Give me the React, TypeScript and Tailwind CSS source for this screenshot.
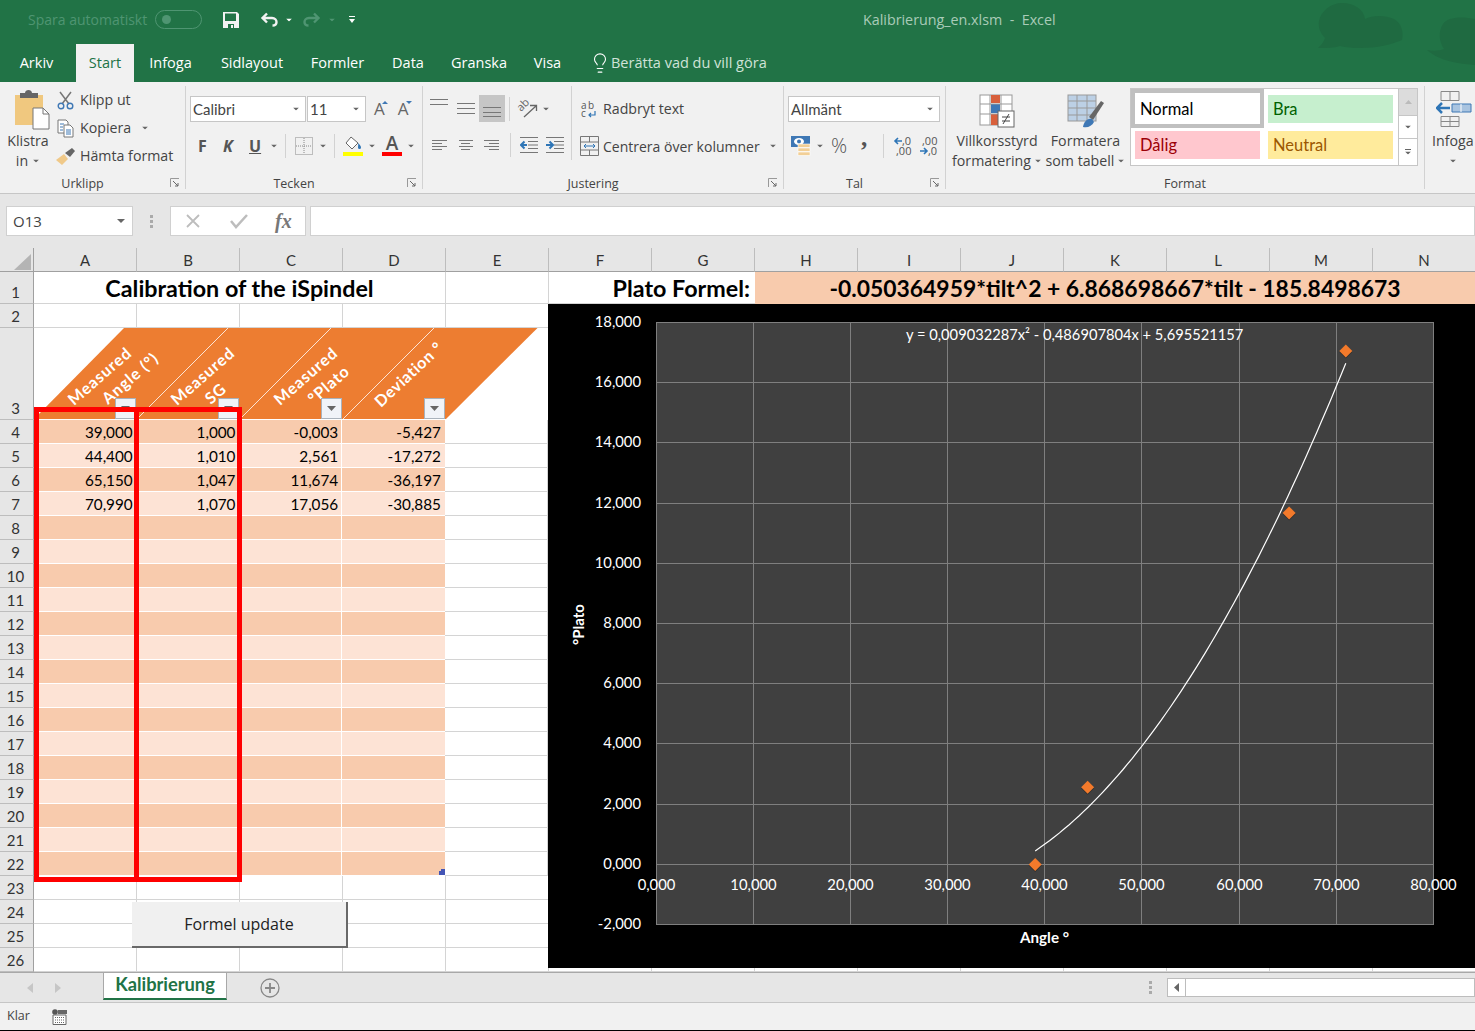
import { Lightbulb } from "lucide-react";

const COLS = ["A", "B", "C", "D", "E", "F", "G", "H", "I", "J", "K", "L", "M", "N"];
const DATA: Record<number, string[]> = {
  4: ["39,000", "1,000", "-0,003", "-5,427"],
  5: ["44,400", "1,010", "2,561", "-17,272"],
  6: ["65,150", "1,047", "11,674", "-36,197"],
  7: ["70,990", "1,070", "17,056", "-30,885"],
};
const TABLE_ROWS = Array.from({ length: 19 }, (_, i) => i + 4);
const POINTS = [
  [39, -0.003],
  [44.4, 2.561],
  [65.15, 11.674],
  [70.99, 17.056],
];

const px = (x: number) => 656.5 + x * 9.71;
const py = (y: number) => 864.3 - y * 30.1;
const trend = Array.from({ length: 65 }, (_, i) => {
  const x = 39 + (i * 31.99) / 64;
  const y = 0.009032287 * x * x - 0.486907804 * x + 5.695521157;
  return `${i === 0 ? "M" : "L"}${px(x).toFixed(1)} ${py(y).toFixed(1)}`;
}).join(" ");

function Caret({ className = "", fill = "#666" }: { className?: string; fill?: string }) {
  return (
    <svg width="8" height="4" viewBox="0 0 8 4" className={`shrink-0 ${className}`}>
      <path d="M0 0h8L4 4z" fill={fill} />
    </svg>
  );
}

function Launcher() {
  return (
    <svg width="10" height="10" viewBox="0 0 10 10" className="absolute right-[5px] bottom-[1px]">
      <path d="M.5 9V.5H9" stroke="#999" fill="none" />
      <path d="M3 3l5 5M8 5v3H5" stroke="#666" fill="none" />
    </svg>
  );
}

function Group({ width, label, launcher, children }: { width: string; label: string; launcher?: boolean; children: React.ReactNode }) {
  return (
    <div className={`relative flex h-[103px] shrink-0 flex-col border-r border-[#d2d2d2] ${width}`}>
      <div className="h-[91px] shrink-0">{children}</div>
      <div className={`text-center text-[12.5px] leading-[14px] text-[#444] ${launcher ? "pr-[20px]" : ""}`}>{label}</div>
      {launcher && <Launcher />}
    </div>
  );
}

function Combo({ width, text }: { width: string; text: string }) {
  return (
    <div className={`flex h-[26px] items-center justify-between border border-[#c6c6c6] bg-white pr-[5px] pl-[2px] text-[#444] ${width}`}>
      <span className="font-['Lato',sans-serif] text-[15px]">{text}</span>
      <Caret className="scale-75" />
    </div>
  );
}

function AlignIcon({ widths }: { widths: "left" | "center" | "right" }) {
  const rows = widths === "left" ? [[0, 15], [0, 10], [0, 15], [0, 10]] : widths === "center" ? [[1, 15], [3, 12], [1, 15], [3, 12]] : [[0, 15], [5, 15], [0, 15], [5, 15]];
  return (
    <svg width="16" height="12" viewBox="0 0 16 12">
      {rows.map(([a, b], i) => (
        <path key={i} d={`M${a} ${1.5 + i * 3}H${b}`} stroke="#777" />
      ))}
    </svg>
  );
}

function VAlignIcon({ ys }: { ys: number[] }) {
  return (
    <svg width="18" height="27" viewBox="0 0 18 27">
      {ys.map((y) => (
        <path key={y} d={`M0 ${y}.5H18`} stroke="#777" />
      ))}
    </svg>
  );
}

function IndentIcon({ right }: { right?: boolean }) {
  return (
    <svg width="18" height="16" viewBox="0 0 18 16" fill="none">
      <path d="M0 .5h18M0 15.500h18M8 4.500h10M8 8h10M8 11.500h10" stroke="#777" />
      {right ? (
        <path d="M0 8h7M3.500 4.500L7 8l-3.500 3.500" stroke="#2e75b6" strokeWidth="2" />
      ) : (
        <path d="M7 8H1M4.500 4.500L1 8l3.500 3.500" stroke="#2e75b6" strokeWidth="2" />
      )}
    </svg>
  );
}

function Separator({ height = "h-[24px]" }: { height?: string }) {
  return <div className={`w-px bg-[#d2d2d2] ${height}`} />;
}

function RowHead({ n }: { n: number }) {
  return (
    <div className="flex w-[34px] shrink-0 items-end justify-center border-r border-b border-r-[#a0a0a0] border-b-[#bdbdbd] bg-[#e6e6e6] pr-[2px] text-[15px] leading-[21px] text-[#333]">
      {n}
    </div>
  );
}

function GridCells({ count }: { count: number }) {
  return (
    <>
      {Array.from({ length: count }, (_, i) => (
        <div key={i} className="w-[103px] shrink-0 border-r border-b border-[#d4d4d4]" />
      ))}
    </>
  );
}

function PlainRow({ n }: { n: number }) {
  return (
    <div className="flex h-[24px]">
      <RowHead n={n} />
      <GridCells count={14} />
    </div>
  );
}

function FilterButton() {
  return (
    <div className="z-10 flex h-[21px] w-[21px] items-center justify-center border border-[#a9b2bc] bg-[#f0f3f8]">
      <svg width="9" height="5" viewBox="0 0 9 5">
        <path d="M0 0h9L4.5 5z" fill="#666" />
      </svg>
    </div>
  );
}

function HeaderRow() {
  const titles: [number, string, string][] = [
    [0, "Measured", "Angle (°)"],
    [103, "Measured", "SG"],
    [206, "Measured", "°Plato"],
  ];
  return (
    <div className="relative flex h-[92px]">
      <RowHead n={3} />
      <svg className="absolute top-0 left-[34px] h-[92px] w-[514px]" viewBox="34 328 514 92">
        <path d="M34 419L124 328H537.5L446 419z" fill="#ed7d31" />
        <path d="M137 419L228 328M240 419L331 328M343 419L434 328" stroke="#fff" strokeWidth="0.8" />
        <path d="M34 419.5H446" stroke="#fff" />
        {titles.map(([dx, a, b]) => (
          <g key={dx} fill="#fff" fontSize="16" fontWeight="700" fontFamily="Lato, sans-serif" letterSpacing="0.9">
            <text transform={`translate(${74 + dx} 406) rotate(-41)`}>{a}</text>
            <text transform={`translate(${108 + dx} 405) rotate(-41)`}>{b}</text>
          </g>
        ))}
        <text transform="translate(381 408) rotate(-43)" fill="#fff" fontSize="16" fontWeight="700" fontFamily="Lato, sans-serif" letterSpacing="0.6">
          Deviation °
        </text>
      </svg>
      {[0, 1, 2, 3].map((c) => (
        <div key={c} className="flex w-[103px] items-end justify-end pr-[1px] pb-[1px]">
          <FilterButton />
        </div>
      ))}
    </div>
  );
}

function Chart() {
  const hLines = [322.5, 382.5, 442.5, 503.5, 563.5, 623.5, 683.5, 743.5, 804.5, 864.5, 924.5];
  const vLines = [656.5, 753.5, 850.5, 947.5, 1044.5, 1141.5, 1239.5, 1336.5, 1433.5];
  const yLabels = ["18,000", "16,000", "14,000", "12,000", "10,000", "8,000", "6,000", "4,000", "2,000", "0,000", "-2,000"];
  const xLabels = ["0,000", "10,000", "20,000", "30,000", "40,000", "50,000", "60,000", "70,000", "80,000"];
  return (
    <svg className="absolute top-[32px] left-[548px] z-30 h-[664px] w-[927px]" viewBox="548 304 927 664" fontFamily="Lato, sans-serif">
      <rect x="548" y="304" width="927" height="664" fill="#000" />
      <rect x="656" y="322" width="778" height="603" fill="#404040" />
      {hLines.map((y) => (
        <path key={y} d={`M656 ${y}H1434`} stroke="#7f7f7f" />
      ))}
      {vLines.map((x) => (
        <path key={x} d={`M${x} 322V925`} stroke="#7f7f7f" />
      ))}
      {yLabels.map((t, i) => (
        <text key={t} x="641" y={327 + i * 60.2} textAnchor="end" fill="#fff" fontSize="14.8">
          {t}
        </text>
      ))}
      {xLabels.map((t, i) => (
        <text key={t} x={vLines[i]} y="890" textAnchor="middle" fill="#fff" fontSize="14.8">
          {t}
        </text>
      ))}
      <text x="906" y="340" fill="#fff" fontSize="14.7">
        y = 0,009032287x² - 0,486907804x + 5,695521157
      </text>
      <text x="1020" y="943" fill="#fff" fontSize="15.2" fontWeight="700">
        Angle °
      </text>
      <text transform="translate(584 645) rotate(-90)" fill="#fff" fontSize="15" fontWeight="700">
        °Plato
      </text>
      <path d={trend} fill="none" stroke="#fff" strokeWidth="1.2" />
      {POINTS.map(([x, y]) => (
        <g key={x} transform={`translate(${px(x)} ${py(y)})`}>
          <path d="M0 -5.500L6.500 1L0 7.500L-6.500 1z" fill="#222" opacity="0.6" />
          <path d="M0 -6.500L6.500 0L0 6.500L-6.500 0z" fill="#f37a2b" />
        </g>
      ))}
    </svg>
  );
}

function Sheet() {
  return (
    <div className="relative h-[700px] w-[1475px] overflow-hidden bg-white font-['Lato',sans-serif]">
      <div className="flex h-[32px]">
        <RowHead n={1} />
        <div className="flex w-[412px] items-center justify-center border-r border-b border-[#d4d4d4] pt-[2px] text-[23.3px] font-bold whitespace-nowrap text-black">Calibration of the iSpindel</div>
        <div className="w-[103px] border-r border-b border-[#d4d4d4]" />
        <div className="flex w-[206px] items-center justify-end border-b border-[#d4d4d4] pt-[2px] pr-[5px] text-[23.3px] font-bold whitespace-nowrap text-black">Plato Formel:</div>
        <div className="flex flex-1 items-center justify-center bg-[#f8cbad] pt-[1px] text-[22.9px] font-bold whitespace-nowrap text-black">-0.050364959*tilt^2 + 6.868698667*tilt - 185.8498673</div>
      </div>
      <PlainRow n={2} />
      <HeaderRow />
      {TABLE_ROWS.map((n) => (
        <div key={n} className="flex h-[24px]">
          <RowHead n={n} />
          {[0, 1, 2, 3].map((c) => (
            <div
              key={c}
              className={`flex w-[103px] items-center justify-end border-b border-white pt-[1px] pr-[3px] text-[15.3px] text-black ${c < 3 ? "border-r" : "pr-[4px]"} ${n % 2 === 0 ? "bg-[#f8cbad]" : "bg-[#fde3d5]"}`}
            >
              {DATA[n]?.[c]}
            </div>
          ))}
          <GridCells count={10} />
        </div>
      ))}
      {[23, 24, 25, 26].map((n) => (
        <PlainRow key={n} n={n} />
      ))}

      <svg width="6" height="6" viewBox="0 0 6 6" className="absolute top-[597px] left-[439px]">
        <path d="M2 0h4v6H0V2h2z" fill="#4455b5" />
      </svg>

      <div className="absolute top-[135px] left-[34px] z-20 h-[475px] w-[105px] border-[5px] border-[#ff0000]" />
      <div className="absolute top-[135px] left-[134px] z-20 h-[475px] w-[108px] border-[5px] border-[#ff0000]" />

      <div className="absolute top-[630px] left-[132px] flex h-[46px] w-[216px] items-center justify-center border-r-2 border-b-2 border-[#696969] bg-[#f0f0f0] font-['Open_Sans',sans-serif] text-[16px] text-[#222]">
        Formel update
      </div>

      <Chart />
    </div>
  );
}

function Ribbon() {
  return (
    <div className="flex h-[112px] shrink-0 border-b border-[#c6c6c6] bg-[#f1f1f1] pt-[4px] font-['Open_Sans',sans-serif] text-[14.2px] text-[#444]">
      <Group width="w-[186px]" label="Urklipp" launcher>
        <div className="flex">
          <div className="flex w-[56px] flex-col items-center pt-[4px] leading-[20px]">
            <svg width="36" height="40" viewBox="0 0 36 40" className="ml-[10px]">
              <path d="M0 5h28v30H0z" fill="#f0c87f" />
              <path d="M5 8V3h5c0-4 7-4 7 0h6v5z" fill="#666" />
              <path d="M18 18h10l6 6v15H18z" fill="#fff" stroke="#777" />
              <path d="M28 18v6h6" fill="none" stroke="#777" />
            </svg>
            <span className="mt-[1px]">Klistra</span>
            <span className="flex items-center gap-[4px]">
              in <Caret className="scale-75" />
            </span>
          </div>
          <div className="flex flex-col">
            <div className="flex h-[28px] items-center gap-[5px] pl-[1px]">
              <svg width="18" height="19" viewBox="0 0 18 19" fill="none">
                <path d="M3 1l9 12M14 1L5 13" stroke="#777" strokeWidth="1.500" />
                <circle cx="4" cy="15" r="2.800" stroke="#3f78b5" strokeWidth="1.400" />
                <circle cx="13" cy="15" r="2.800" stroke="#3f78b5" strokeWidth="1.400" />
              </svg>
              <span>Klipp ut</span>
            </div>
            <div className="flex h-[28px] items-center gap-[5px]">
              <svg width="19" height="19" viewBox="0 0 19 19" fill="#fff">
                <path d="M2 1h8l2 2v11H2z" stroke="#777" />
                <path d="M8 6h6l3 3v9H8z" stroke="#777" />
                <path d="M10 11h5M10 13h5M10 15h5" stroke="#3f78b5" />
                <path d="M4 5h4M4 8h3M4 11h3" stroke="#3f78b5" />
              </svg>
              <span>Kopiera</span>
              <Caret className="ml-[5px] scale-75" />
            </div>
            <div className="flex h-[28px] items-center gap-[5px]">
              <svg width="19" height="17" viewBox="0 0 19 17">
                <path d="M0 12l8-6 4 5-6 6z" fill="#f0c989" />
                <path d="M9 5l7-5 3 3-5 6z" fill="#666" />
              </svg>
              <span>Hämta format</span>
            </div>
          </div>
        </div>
      </Group>

      <Group width="w-[237px]" label="Tecken" launcher>
        <div className="flex items-center pt-[10px] pl-[4px]">
          <Combo width="w-[116px]" text="Calibri" />
          <Combo width="ml-[1px] w-[59px]" text="11" />
          <div className="ml-[8px] flex items-center gap-[13px] text-[17px] leading-[20px] text-[#666]">
            <span className="relative">
              A
              <svg width="6" height="3" viewBox="0 0 6 3" className="absolute top-[2px] -right-[3px]"><path d="M3 0l3 3H0z" fill="#3f78b5" /></svg>
            </span>
            <span className="relative">
              A
              <svg width="6" height="3" viewBox="0 0 6 3" className="absolute top-[2px] -right-[3px]"><path d="M0 0h6L3 3z" fill="#3f78b5" /></svg>
            </span>
          </div>
        </div>
        <div className="mt-[11px] flex h-[26px] items-center pl-[12px] text-[#555]">
          <span className="w-[25px] text-[16px] font-bold">F</span>
          <span className="w-[26px] text-[16px] font-bold italic">K</span>
          <span className="w-[20px] text-[16px] font-bold underline">U</span>
          <Caret className="ml-[1px] scale-75" />
          <div className="ml-[7px]"><Separator /></div>
          <svg width="18" height="18" viewBox="0 0 18 18" fill="none" className="ml-[9px]">
            <rect x="0.500" y="0.500" width="17" height="17" stroke="#888" strokeDasharray="1 1" />
            <path d="M9 1v16M1 9h16" stroke="#888" strokeDasharray="1 1" />
          </svg>
          <Caret className="mr-[7px] ml-[6px] scale-75" />
          <Separator />
          <div className="ml-[8px] flex w-[20px] flex-col items-center">
            <svg width="18" height="15" viewBox="0 0 18 15">
              <path d="M7 1l7 6-6 6-6-6z" fill="#fff" stroke="#666" />
              <path d="M14 7c2 2 3 3 3 4.500a1.500 1.500 0 0 1-3 0c0-1 .5-2 0-4.500z" fill="#2e75b6" />
            </svg>
            <div className="mt-[1px] h-[4px] w-[20px] bg-[#ffff00]" />
          </div>
          <Caret className="ml-[5px] scale-75" />
          <div className="ml-[6px] flex w-[20px] flex-col items-center">
            <span className="text-[19px] leading-[15px] font-semibold text-[#555]">A</span>
            <div className="mt-[1px] h-[4px] w-[20px] bg-[#ff0000]" />
          </div>
          <Caret className="ml-[5px] scale-75" />
        </div>
      </Group>

      <Group width="w-[361px]" label="Justering" launcher>
        <div className="flex">
          <div className="w-[149px] shrink-0 border-r border-[#d2d2d2]">
            <div className="flex items-center pt-[9px] pl-[7px]">
              <div className="h-[27px] w-[27px]"><VAlignIcon ys={[4, 9]} /></div>
              <div className="h-[27px] w-[22px]"><VAlignIcon ys={[8, 13, 18]} /></div>
              <div className="flex h-[27px] w-[26px] items-center justify-center bg-[#c6c6c6]">
                <VAlignIcon ys={[12, 17, 21]} />
              </div>
              <div className="ml-[4px] h-[24px] w-px bg-[#d2d2d2]" />
              <svg width="20" height="18" viewBox="0 0 20 18" fill="none" className="ml-[8px] overflow-visible">
                <text transform="translate(3 12) rotate(-45)" fontSize="11" fill="#666" fontFamily="Open Sans, sans-serif">ab</text>
                <path d="M6 17L18 6M12 5.500h6.500v5.500" stroke="#666" strokeWidth="1.300" />
              </svg>
              <Caret className="ml-[4px] scale-75" />
            </div>
            <div className="mt-[10px] flex h-[26px] items-center pl-[9px]">
              <div className="w-[26px]"><AlignIcon widths="left" /></div>
              <div className="w-[26px]"><AlignIcon widths="center" /></div>
              <div className="w-[26px]"><AlignIcon widths="right" /></div>
              <Separator />
              <div className="ml-[9px]"><IndentIcon /></div>
              <div className="ml-[8px]"><IndentIcon right /></div>
            </div>
          </div>
          <div className="flex flex-col pl-[8px]">
            <div className="mt-[9px] flex h-[28px] items-center">
              <svg width="21" height="17" viewBox="0 0 21 17" fill="none" className="mr-[2px] shrink-0 overflow-visible">
                <text x="1" y="7.500" fontSize="10" fill="#555" fontFamily="Open Sans, sans-serif" letterSpacing="1.500">ab</text>
                <text x="1" y="16" fontSize="10" fill="#555" fontFamily="Open Sans, sans-serif">c</text>
                <path d="M15 10v4H9M11 12l-2 2 2 2" stroke="#2e75b6" strokeWidth="1.200" />
              </svg>
              <span>Radbryt text</span>
            </div>
            <div className="mt-[9px] flex h-[28px] items-center">
              <svg width="19" height="20" viewBox="0 0 19 20" fill="none" className="mr-[4px] shrink-0">
                <path d="M.5.500h18v19H.5zM.5 6h18M.5 14h18M9.500.500V6M9.500 14v5.500" stroke="#777" />
                <path d="M4 10h11M6 8l-2 2 2 2M13 8l2 2-2 2" stroke="#2e75b6" />
              </svg>
              <span className="text-[14px] whitespace-nowrap">Centrera över kolumner</span>
              <Caret className="ml-[9px] scale-75" />
            </div>
          </div>
        </div>
      </Group>

      <Group width="w-[162px]" label="Tal" launcher>
        <div className="pt-[10px] pl-[4px]">
          <Combo width="w-[152px]" text="Allmänt" />
        </div>
        <div className="mt-[11px] flex h-[26px] items-center pl-[7px]">
          <svg width="20" height="20" viewBox="0 0 20 20">
            <rect x="0" y="0" width="19" height="11" fill="#3f78b5" />
            <ellipse cx="8" cy="5.500" rx="5" ry="3.500" fill="#fff" />
            <circle cx="8" cy="5.500" r="2" fill="#3f78b5" />
            <path d="M7 8h12v3.500H7zM7 12h12v3.500H7zM7 16h12v3.500H7z" fill="#f2cf96" stroke="#fff" strokeWidth="0.600" />
          </svg>
          <Caret className="ml-[5px] scale-75" />
          <span className="ml-[7px] w-[30px] text-[20px] font-light text-[#555]">%</span>
          <svg width="22" height="18" viewBox="0 0 22 18" className="overflow-visible">
            <text x="0" y="9" fontSize="25" fontWeight="700" fill="#555" fontFamily="Liberation Serif, serif">,</text>
          </svg>
          <Separator />
          <svg width="17" height="20" viewBox="0 0 17 20" fill="none" className="ml-[10px] overflow-visible">
            <path d="M8 5H1M4 2L1 5l3 3" stroke="#2e75b6" strokeWidth="1.600" />
            <text x="8" y="9" fontSize="11" fill="#555" fontFamily="Open Sans, sans-serif">,0</text>
            <text x="2" y="19" fontSize="11" fill="#555" fontFamily="Open Sans, sans-serif">,00</text>
          </svg>
          <svg width="17" height="20" viewBox="0 0 17 20" fill="none" className="ml-[9px] overflow-visible">
            <path d="M0 15h7M4 12l3 3-3 3" stroke="#2e75b6" strokeWidth="1.600" />
            <text x="2" y="9" fontSize="11" fill="#555" fontFamily="Open Sans, sans-serif">,00</text>
            <text x="8" y="19" fontSize="11" fill="#555" fontFamily="Open Sans, sans-serif">,0</text>
          </svg>
        </div>
      </Group>

      <Group width="w-[479px]" label="Format">
        <div className="flex items-start">
          <div className="flex w-[102px] flex-col items-center pt-[8px] leading-[20px] whitespace-nowrap">
            <svg width="36" height="34" viewBox="0 0 36 34">
              <rect x="1" y="1" width="32" height="30" fill="#fff" stroke="#999" />
              <path d="M12 1h9v8h-9z" fill="#d8603c" />
              <path d="M12 10h9v9h-9z" fill="#3f78b5" />
              <path d="M12 20h9v11h-9z" fill="#d8603c" />
              <path d="M11 1v30M22 1v30M1 10h32M1 20h32" stroke="#999" />
              <rect x="19" y="17" width="16" height="16" fill="#fff" stroke="#666" />
              <path d="M23 23h8M23 27h8M30 20l-6 10" stroke="#444" fill="none" />
            </svg>
            <span className="mt-[3px]">Villkorsstyrd</span>
            <span className="flex items-center gap-[3px]">
              formatering <Caret className="scale-75" />
            </span>
          </div>
          <div className="ml-[-3px] flex w-[81px] flex-col items-center pt-[8px] leading-[20px] whitespace-nowrap">
            <svg width="38" height="34" viewBox="0 0 38 34">
              <rect x="1" y="1" width="28" height="26" fill="#bcd0e5" stroke="#999" />
              <path d="M1 7h28M1 14h28M1 21h28M10 1v26M20 1v26" stroke="#999" />
              <path d="M22 23L34 7l3 2-11 17z" fill="#666" />
              <path d="M16 33c1-6 5-9 9-8l2 3c-2 4-6 6-11 5z" fill="#3f78b5" />
            </svg>
            <span className="mt-[3px]">Formatera</span>
            <span className="flex items-center gap-[3px]">
              som tabell <Caret className="scale-75" />
            </span>
          </div>
          <div className="mt-[2px] ml-[4px] flex h-[78px] w-[288px] shrink-0 border border-[#c6c6c6] bg-white font-['Lato',sans-serif] text-[16.5px]">
            <div className="grid w-[267px] grid-cols-[133px_134px] grid-rows-[39px_34px]">
              <div className="flex items-center border-[4px] border-[#c0c0c0] bg-white pt-[1px] pl-[5px] text-black">Normal</div>
              <div className="flex items-center pl-[4px]">
                <div className="flex h-[28px] w-[125px] items-center bg-[#c6efce] pt-[1px] pl-[5px] text-[#006100]">Bra</div>
              </div>
              <div className="flex items-center pl-[4px]">
                <div className="flex h-[28px] w-[125px] items-center bg-[#ffc7ce] pl-[5px] text-[#9c0006]">Dålig</div>
              </div>
              <div className="flex items-center pl-[4px]">
                <div className="flex h-[28px] w-[125px] items-center bg-[#ffeb9c] pl-[5px] text-[#9c5700]">Neutral</div>
              </div>
            </div>
            <div className="ml-auto flex w-[19px] flex-col border-l border-[#c6c6c6]">
              <div className="flex h-[26px] items-center justify-center bg-[#dcdcdc]">
                <svg width="7" height="4" viewBox="0 0 7 4"><path d="M3.500 0L7 4H0z" fill="#bbb" /></svg>
              </div>
              <div className="flex h-[24px] items-center justify-center border-y border-[#c6c6c6]">
                <Caret className="scale-75" />
              </div>
              <div className="flex flex-1 flex-col items-center justify-center gap-[1px]">
                <div className="h-px w-[6px] bg-[#666]" />
                <Caret className="scale-75" />
              </div>
            </div>
          </div>
        </div>
      </Group>

      <div className="relative flex w-[50px] shrink-0 flex-col items-start pt-[5px] pl-[7px] leading-[20px] whitespace-nowrap">
        <svg width="36" height="36" viewBox="0 0 36 36" fill="none" className="ml-[4px]">
          <path d="M5 .5h18v9H5zM14 .5v9" stroke="#888" />
          <path d="M5 25.500h18v10H5zM14 25.500v10M5 30.500h18" stroke="#888" />
          <path d="M16 13h19v8H16z" fill="#a9c4e0" stroke="#3f78b5" />
          <path d="M25 13v8" stroke="#fff" />
          <path d="M14 17H2M6 12l-5 5 5 5" stroke="#2e75b6" strokeWidth="2.500" />
        </svg>
        <span className="mt-[4px]">Infoga</span>
        <Caret className="mt-[8px] ml-[17px] scale-75" />
      </div>
    </div>
  );
}

export default function App() {
  return (
    <div className="flex h-[1031px] w-[1475px] flex-col overflow-hidden bg-white font-['Open_Sans',sans-serif]">
      <div className="relative shrink-0 overflow-hidden bg-[#217346]">
        <svg width="175" height="65" viewBox="1300 0 175 65" className="absolute top-0 right-0">
          <path d="M1342 3c13 0 22 7 23 16 8-4 20-4 29 0 7 4 10 12 8 21-13 6-40 11-62 6-6 2-14 2-22 2 3-3 6-6 7-10-5-5-7-11-6-17 2-10 12-18 23-18z" fill="#1f6a41" />
          <path d="M1475 19c-14-3-28-2-32 5-5 8-4 17 1 25-5 2-11 2-17 1 8 7 20 13 48 15z" fill="#1f6a41" />
        </svg>
        <div className="relative flex h-[41px] items-center pb-[2px] pl-[28px] text-[14px]">
          <span className="w-[127px] whitespace-nowrap text-[#4f9572]">Spara automatiskt</span>
          <div className="flex h-[19px] w-[47px] items-center rounded-full border border-[#4f9572] pl-[6px]">
            <div className="h-[9px] w-[9px] rounded-full bg-[#4f9572]" />
          </div>
          <svg width="16" height="16" viewBox="0 0 16 16" className="ml-[21px]">
            <path d="M0 0h14l2 2v14H0z" fill="#f2f2f2" />
            <path d="M2 1.500h11V9H2z" fill="#217346" />
            <path d="M5 12h6v4H5z" fill="#217346" />
            <path d="M8 13h2v3H8z" fill="#f2f2f2" />
          </svg>
          <svg width="18" height="15" viewBox="0 0 18 15" fill="none" className="ml-[21px]">
            <path d="M7 1.500L2.500 6l4.500 4.500M3 6h9c3 0 4.500 2 4.500 4s-1.500 3.500-4 3.500" stroke="#f2f2f2" strokeWidth="2.400" />
          </svg>
          <Caret className="ml-[7px] scale-75" fill="#fff" />
          <svg width="18" height="15" viewBox="0 0 18 15" fill="none" className="ml-[10px]">
            <path d="M11 1.500L15.500 6 11 10.500M15 6H6c-3 0-4.500 2-4.500 4s1.500 3.500 4 3.500" stroke="#4f9572" strokeWidth="2.400" />
          </svg>
          <Caret className="ml-[7px] scale-75" fill="#4f9572" />
          <svg width="6" height="8" viewBox="0 0 6 8" className="ml-[13px]">
            <path d="M0 0h6v1H0zM0 3h6L3 7z" fill="#fff" />
          </svg>
          <span className="absolute top-[9px] left-[863px] text-[14.3px] whitespace-nowrap text-[#a9cbb8]">Kalibrierung_en.xlsm&nbsp; -&nbsp; Excel</span>
        </div>
        <div className="relative flex h-[41px] items-end gap-[29px] pl-[20px] text-[14.5px] text-white">
          <span className="flex h-[38px] w-[33px] items-center justify-center">Arkiv</span>
          <span className="mr-[-14px] ml-[-6px] flex h-[38px] w-[58px] items-center justify-center bg-[#f1f1f1] text-[#217346]">Start</span>
          <span className="flex h-[38px] w-[43px] items-center justify-center">Infoga</span>
          <span className="flex h-[38px] w-[62px] items-center justify-center">Sidlayout</span>
          <span className="flex h-[38px] w-[51px] items-center justify-center">Formler</span>
          <span className="flex h-[38px] w-[32px] items-center justify-center">Data</span>
          <span className="flex h-[38px] w-[52px] items-center justify-center">Granska</span>
          <span className="flex h-[38px] w-[27px] items-center justify-center">Visa</span>
          <span className="-ml-[1px] flex h-[38px] items-center whitespace-nowrap text-[#d0e3d8]">
            <Lightbulb size={22} strokeWidth={1.2} className="text-white" />
            Berätta vad du vill göra
          </span>
        </div>
      </div>

      <Ribbon />

      <div className="flex h-[54px] shrink-0 bg-[#e6e6e6] pt-[12px] pl-[6px]">
        <div className="flex h-[30px] w-[127px] items-center justify-between border border-[#d0d0d0] bg-white pr-[7px] pl-[6px] text-[15px] text-[#444]">
          O13
          <Caret />
        </div>
        <div className="flex h-[30px] w-[37px] flex-col items-center justify-center gap-[2px]">
          <div className="h-[3px] w-[3px] bg-[#aaa]" />
          <div className="h-[3px] w-[3px] bg-[#aaa]" />
          <div className="h-[3px] w-[3px] bg-[#aaa]" />
        </div>
        <div className="flex h-[30px] w-[136px] items-center border border-[#d0d0d0] bg-white pl-[14px]">
          <svg width="16" height="16" viewBox="0 0 16 16" fill="none">
            <path d="M2 2l12 12M14 2L2 14" stroke="#bdbdbd" strokeWidth="1.800" />
          </svg>
          <svg width="18" height="16" viewBox="0 0 18 16" fill="none" className="ml-[29px]">
            <path d="M1 8l5 6L17 2" stroke="#bdbdbd" strokeWidth="2.500" />
          </svg>
          <span className="ml-[27px] font-['Liberation_Serif',serif] text-[20px] font-bold text-[#777] italic">fx</span>
        </div>
        <div className="ml-[4px] h-[30px] flex-1 border border-[#d0d0d0] bg-white" />
      </div>

      <div className="flex h-[24px] shrink-0 bg-[#e6e6e6] font-['Lato',sans-serif] text-[15px] text-[#333]">
        <div className="relative w-[34px] shrink-0 border-r border-b border-r-[#a0a0a0] border-b-[#a0a0a0]">
          <svg width="17" height="16" viewBox="0 0 17 16" className="absolute top-[6px] left-[14px]">
            <path d="M17 0v16H0z" fill="#b4b4b4" />
          </svg>
        </div>
        {COLS.map((c) => (
          <div key={c} className="flex w-[103px] shrink-0 items-center justify-center border-r border-b border-r-[#bdbdbd] border-b-[#a0a0a0] pt-[1px]">
            {c}
          </div>
        ))}
      </div>

      <Sheet />

      <div className="flex h-[31px] shrink-0 border-t border-b border-t-[#a8a8a8] border-b-[#c6c6c6] bg-[#e6e6e6]">
        <div className="flex w-[103px] items-center gap-[22px] pl-[27px]">
          <svg width="6" height="10" viewBox="0 0 6 10"><path d="M6 0v10L0 5z" fill="#c6c6c6" /></svg>
          <svg width="6" height="10" viewBox="0 0 6 10"><path d="M0 0v10l6-5z" fill="#c6c6c6" /></svg>
        </div>
        <div className="flex h-[27px] w-[124px] items-center justify-center border-x border-b-2 border-x-[#a8a8a8] border-b-[#217346] bg-white pb-[2px] font-['Lato',sans-serif] text-[18.3px] font-bold text-[#217346]">
          Kalibrierung
        </div>
        <div className="ml-[33px] flex h-[29px] items-center">
          <svg width="20" height="20" viewBox="0 0 20 20" fill="none">
            <circle cx="10" cy="10" r="9" stroke="#888" strokeWidth="1.300" />
            <path d="M10 5v10M5 10h10" stroke="#888" strokeWidth="1.800" />
          </svg>
        </div>
        <div className="ml-[868px] flex h-[29px] w-[4px] flex-col items-center justify-center gap-[2px]">
          <div className="h-[3px] w-[3px] bg-[#aaa]" />
          <div className="h-[3px] w-[3px] bg-[#aaa]" />
          <div className="h-[3px] w-[3px] bg-[#aaa]" />
        </div>
        <div className="mt-[5px] ml-[15px] flex h-[19px] flex-1 border border-[#bdbdbd] bg-white">
          <div className="flex w-[18px] items-center justify-center border-r border-[#bdbdbd]">
            <svg width="5" height="9" viewBox="0 0 5 9"><path d="M5 0v9L0 4.500z" fill="#666" /></svg>
          </div>
        </div>
      </div>

      <div className="flex h-[28px] shrink-0 items-center border-b border-black bg-[#f1f1f1] pl-[7px] text-[12.5px] text-[#444]">
        Klar
        <svg width="15" height="16" viewBox="0 0 15 16" fill="none" className="ml-[22px]">
          <circle cx="3" cy="3" r="2.800" fill="#555" />
          <path d="M1 6h13v9.500H1z" stroke="#666" fill="#fff" />
          <path d="M6 1h9v4H6z" fill="#666" />
          <path d="M3 8.500h9M3 11h9M3 13.500h9" stroke="#666" strokeDasharray="1 1" />
        </svg>
      </div>
    </div>
  );
}
